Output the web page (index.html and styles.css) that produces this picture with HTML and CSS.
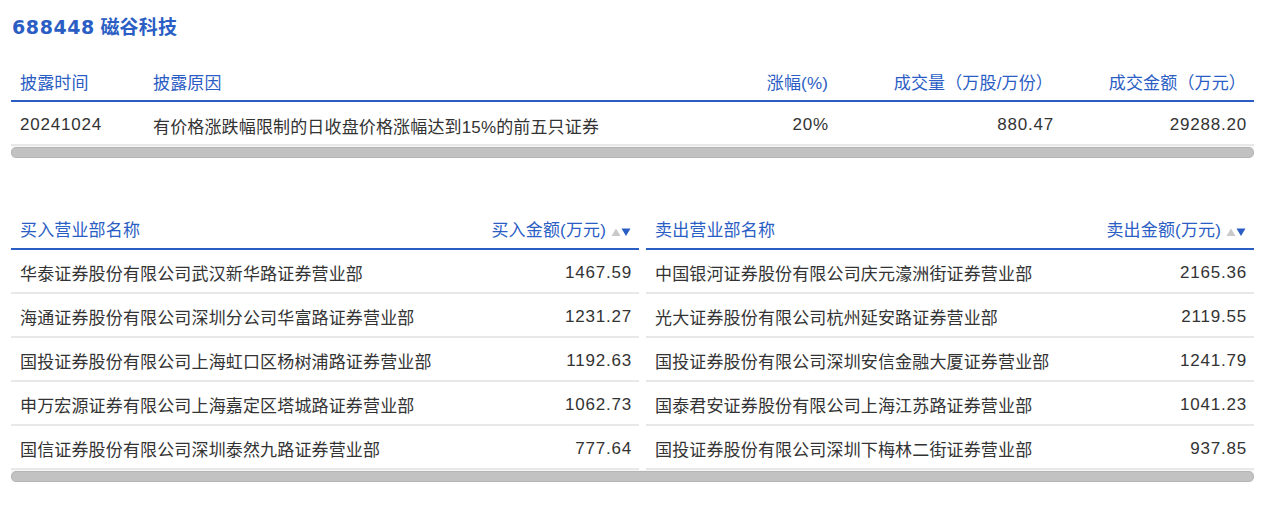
FILE: index.html
```html
<!DOCTYPE html>
<html lang="zh-CN">
<head>
<meta charset="utf-8">
<title>688448 磁谷科技</title>
<link rel="stylesheet" href="styles.css">
</head>
<body>
<div class="page">
  <h1 class="title"><span class="code">688448</span> 磁谷科技</h1>

  <div class="block">
    <div class="grid info head">
      <div class="th">披露时间</div>
      <div class="th">披露原因</div>
      <div class="th r">涨幅(%)</div>
      <div class="th r">成交量（万股/万份）</div>
      <div class="th r">成交金额（万元）</div>
    </div>
    <div class="grid info row">
      <div class="td num">20241024</div>
      <div class="td">有价格涨跌幅限制的日收盘价格涨幅达到15%的前五只证券</div>
      <div class="td r num">20%</div>
      <div class="td r num">880.47</div>
      <div class="td r num endpad">29288.20</div>
    </div>
    <div class="scroll"><div class="thumb"></div></div>
  </div>

  <div class="block second">
    <div class="pair">
      <div class="side left">
        <div class="grid deal head">
          <div class="th">买入营业部名称</div>
          <div class="th r">买入金额(万元)<span class="sort"><svg width="10" height="10" viewBox="0 0 10 10"><path d="M5 1.5 L9.5 9 L0.5 9 Z" fill="#c9c9c9"/></svg><svg width="10" height="10" viewBox="0 0 10 10"><path d="M0.5 1.5 L9.5 1.5 L5 9 Z" fill="#2b5ec4"/></svg></span></div>
        </div>
        <div class="grid deal row"><div class="td">华泰证券股份有限公司武汉新华路证券营业部</div><div class="td r num">1467.59</div></div>
        <div class="grid deal row"><div class="td">海通证券股份有限公司深圳分公司华富路证券营业部</div><div class="td r num">1231.27</div></div>
        <div class="grid deal row"><div class="td">国投证券股份有限公司上海虹口区杨树浦路证券营业部</div><div class="td r num">1192.63</div></div>
        <div class="grid deal row"><div class="td">申万宏源证券有限公司上海嘉定区塔城路证券营业部</div><div class="td r num">1062.73</div></div>
        <div class="grid deal row"><div class="td">国信证券股份有限公司深圳泰然九路证券营业部</div><div class="td r num">777.64</div></div>
      </div>
      <div class="side right">
        <div class="grid deal head">
          <div class="th">卖出营业部名称</div>
          <div class="th r">卖出金额(万元)<span class="sort"><svg width="10" height="10" viewBox="0 0 10 10"><path d="M5 1.5 L9.5 9 L0.5 9 Z" fill="#c9c9c9"/></svg><svg width="10" height="10" viewBox="0 0 10 10"><path d="M0.5 1.5 L9.5 1.5 L5 9 Z" fill="#2b5ec4"/></svg></span></div>
        </div>
        <div class="grid deal row"><div class="td">中国银河证券股份有限公司庆元濠洲街证券营业部</div><div class="td r num">2165.36</div></div>
        <div class="grid deal row"><div class="td">光大证券股份有限公司杭州延安路证券营业部</div><div class="td r num">2119.55</div></div>
        <div class="grid deal row"><div class="td">国投证券股份有限公司深圳安信金融大厦证券营业部</div><div class="td r num">1241.79</div></div>
        <div class="grid deal row"><div class="td">国泰君安证券股份有限公司上海江苏路证券营业部</div><div class="td r num">1041.23</div></div>
        <div class="grid deal row"><div class="td">国投证券股份有限公司深圳下梅林二街证券营业部</div><div class="td r num">937.85</div></div>
      </div>
    </div>
    <div class="scroll"><div class="thumb"></div></div>
  </div>
</div>
</body>
</html>
```

FILE: styles.css
```css
html, body {
  margin: 0;
  padding: 0;
  background: #ffffff;
}
body {
  font-family: "Liberation Sans", "Noto Sans CJK SC", sans-serif;
  font-size: 17px;
  color: #333333;
  letter-spacing: 0.15px;
}
.page {
  padding: 14px 10px 0 11px;
  width: 1243px;
}
.title {
  margin: 0 0 0 1px;
  font-size: 19px;
  line-height: 26px;
  font-weight: bold;
  color: #2b5ec4;
  letter-spacing: 0.2px;
}
.title .code {
  font-family: "DejaVu Sans", sans-serif;
  letter-spacing: 0.6px;
}
.block {
  margin-top: 24px;
}
.block.second {
  margin-top: 54px;
}
.grid {
  display: grid;
  align-items: center;
}
.info {
  grid-template-columns: 133px 542px 150px 225px 1fr;
}
.info.head {
  height: 33px;
  padding-bottom: 2px;
  border-bottom: 2px solid #2b5ec4;
}
.info.row {
  height: 38px;
  padding-top: 4px;
  border-bottom: 2px solid #e8e8e8;
}
.th {
  color: #2b5ec4;
  padding: 0 8px 0 9px;
  white-space: nowrap;
}
.td {
  padding: 0 8px 0 9px;
  white-space: nowrap;
}
.num {
  letter-spacing: 0.8px;
}
.td.r.num {
  padding-right: 7px;
}
.r {
  text-align: right;
}
.td.endpad {
  padding-right: 6px;
}
.scroll {
  height: 12px;
  background: #f7f7f7;
  display: flex;
  align-items: center;
}
.thumb {
  flex: 1;
  height: 9px;
  border-radius: 5px;
  background: #c2c2c2;
  border: 1px solid #b5b5b5;
}
.pair {
  display: flex;
  gap: 7px;
}
.side.left {
  width: 628px;
}
.side.right {
  flex: 1;
}
.deal {
  grid-template-columns: 1fr auto;
}
.deal.head {
  height: 32px;
  padding-bottom: 4px;
  border-bottom: 2px solid #2b5ec4;
}
.deal.row {
  height: 39px;
  padding-top: 3px;
  border-bottom: 2px solid #e8e8e8;
}
.sort {
  display: inline-flex;
  gap: 0;
  margin-left: 5px;
  vertical-align: -1px;
}
.sort svg {
  display: block;
}
```
